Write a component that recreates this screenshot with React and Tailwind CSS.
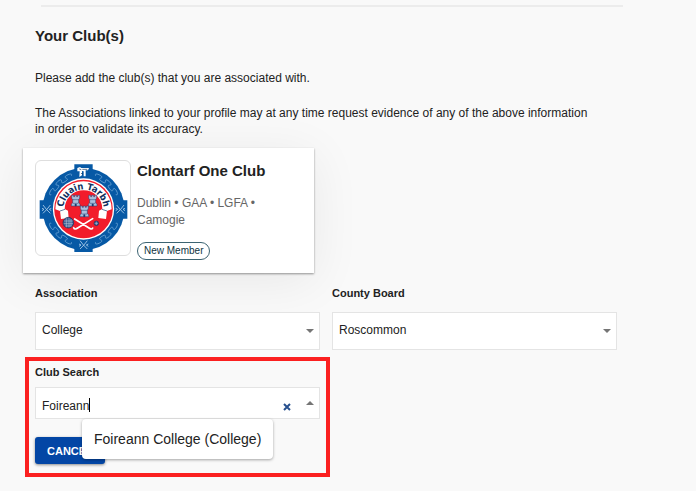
import React, { useState } from 'react';

const TOWERS = [
    { x: 125, y: 131 },
    { x: 176, y: 131 },
    { x: 151, y: 163 },
];

const CENTER = { x: 148.5, y: 155 };

// Wavy line that follows the blue ring between two angles (degrees)
const wavePath = (from, to) => {
    const steps = 60;
    const points = [];
    for (let i = 0; i <= steps; i++) {
        const t = i / steps;
        const angle = ((from + (to - from) * t) * Math.PI) / 180;
        const r = 106 + 7 * Math.sin(t * Math.PI * 5);
        const a = angle - 0.05 * Math.sin(t * Math.PI * 10);
        points.push(`${(CENTER.x + r * Math.cos(a)).toFixed(1)} ${(CENTER.y - r * Math.sin(a)).toFixed(1)}`);
    }
    return `M${points.join('L')}`;
};

const WAVES = [wavePath(24, 70), wavePath(110, 156), wavePath(204, 250), wavePath(290, 336)];

const Tower = ({ x, y }) => (
    <g transform={`translate(${x} ${y})`} stroke="#1d3f73" strokeWidth="1.5">
        <path d="M-12 -17h6v4h3v-4h6v4h3v-4h6v9l-3 3v11l4 3v6h-26v-6l4 -3v-11l-3 -3z" fill="#a9bfdc" />
        <path d="M-9 -4h18M-8 7h16" fill="none" />
        <path d="M-2 15v-6h4v6z" fill="#1d3f73" />
    </g>
);

const CrossedSticks = ({ transform }) => (
    <g transform={transform} fill="none" stroke="#b5d3ed" strokeWidth="2.5">
        <path d="M-11 -13Q-2 0 11 12M11 -13Q2 0 -11 12M-14 -3l6 3l-6 4M14 -3l-6 3l6 4" />
    </g>
);

const Crest = () => (
    <svg viewBox="6 11 282 282" className="block h-full w-full" role="img" aria-label="Cluain Tarbh crest">
        <path d="M121 21h55v24h-55zM121 260h55v24h-55zM17 129h24v55H17zM255 129h25v55h-25z" fill="#0759a5" />
        <circle cx="148.5" cy="155" r="123" fill="#0759a5" />
        {WAVES.map((d) => (
            <path key={d} d={d} fill="none" stroke="#6fa6d6" strokeWidth="2.5" />
        ))}
        <CrossedSticks transform="translate(38 156)" />
        <CrossedSticks transform="translate(259 156)" />
        <CrossedSticks transform="translate(149 263)" />
        <path d="M130 32l8 -3l4 3h23l-3 7h-7v18h-6v-15l-5 -1v13l-8 5l1 -17h-7z" fill="#fff" />
        <path d="M136 35l6 2M145 36h15M141 48l6 2" stroke="#0b2c57" strokeWidth="2" fill="none" />

        <circle cx="148.5" cy="155" r="92" fill="#fff" />
        <circle cx="148.5" cy="155" r="88" fill="#f21c2b" />
        <path
            d="M64 156A84.500 84.500 0 0 1 233 156L219 161L216 185L193 182L195 160L205 155A56 56 0 0 0 92 155L102 160L104 182L81 185L78 161z"
            fill="#fff"
        />
        <path d="M78 161l15 -5M219 161l-15 -5" stroke="#173b70" strokeWidth="2" />
        <path id="crest-arc" d="M88 165A61 61 0 1 1 209 165" fill="none" />
        <text
            fontFamily="'DejaVu Sans Condensed', 'DejaVu Sans', sans-serif"
            fontSize="28"
            fontWeight="700"
            fill="#102f5e"
            textAnchor="middle"
        >
            <textPath href="#crest-arc" startOffset="50%">Cluain Tarbh</textPath>
        </text>
        {TOWERS.map((t) => (
            <Tower key={`${t.x}-${t.y}`} x={t.x} y={t.y} />
        ))}

        <circle cx="103" cy="196" r="16" fill="#3a5e91" stroke="#132f5d" strokeWidth="2" />
        <path d="M90 191h26M89 199h28M97 183v27M105 182v28M111 185v22M94 206h19" stroke="#c9d5e7" strokeWidth="1.5" fill="none" />
        <circle cx="187" cy="198" r="7" fill="#375688" stroke="#132f5d" strokeWidth="1.5" />
        <path d="M182 198h10M187 193v10" stroke="#c9d5e7" strokeWidth="1.5" />
        <path
            d="M122 185l43 27c4 3 9 5 11 0M176 184l-45 28c-4 3 -10 5 -12 -1"
            fill="none"
            stroke="#fff"
            strokeWidth="5"
            strokeLinecap="round"
        />
    </svg>
);

const SelectField = ({ id, label, options }) => (
    <div>
        <label htmlFor={id} className="block text-[11px] leading-4 font-bold">{label}</label>
        <div className="relative mt-[11px]">
            <select
                id={id}
                className="block h-[38px] w-full appearance-none rounded-none border border-[#e4e4e4] bg-white pr-6 pb-0.5 pl-1.5 text-xs text-[#222]"
            >
                {options.map((o) => (
                    <option key={o}>{o}</option>
                ))}
            </select>
            <svg viewBox="0 0 8 4" className="pointer-events-none absolute top-[17px] right-1.5 h-1 w-2">
                <path d="M0 0h8L4 4z" fill="#757575" />
            </svg>
        </div>
    </div>
);

const App = () => {
    const [search, setSearch] = useState('Foireann');

    return (
        <main className="min-h-screen bg-[#f9f9f9] pt-[5px] pr-[79px] pb-3 pl-[35px] font-['Liberation_Sans',Arial,sans-serif] text-xs leading-4 text-[#222]">
            <hr className="-mr-1.5 ml-1.5 h-0.5 border-0 bg-[#ececec]" />

            <h2 className="mt-[19px] text-[15px] leading-5 font-bold">Your Club(s)</h2>
            <p className="mt-6">Please add the club(s) that you are associated with.</p>
            <p className="mt-[19px]">
                The Associations linked to your profile may at any time request evidence of any of the above information
                <br />
                in order to validate its accuracy.
            </p>

            <article className="mt-[11px] -ml-3 flex w-[291px] gap-1.5 bg-white p-3 shadow-[0_1px_2px_rgba(0,0,0,0.4),0_8px_50px_rgba(0,0,0,0.07)]">
                <div className="mb-[5px] size-24 shrink-0 overflow-hidden rounded-md border border-[#dedede] bg-white">
                    <Crest />
                </div>
                <div>
                    <h3 className="text-[15px] leading-[22px] font-bold">Clontarf One Club</h3>
                    <p className="mt-[13px] leading-[17px] text-[#666]">Dublin • GAA • LGFA • Camogie</p>
                    <span className="mt-[13px] inline-flex h-[18px] items-center rounded-full border border-[#3c6472] px-1.5 text-[10px] leading-4 text-[#0f3442]">
                        New Member
                    </span>
                </div>
            </article>

            <form className="mt-3 grid grid-cols-2 gap-x-3 gap-y-[7px]" onSubmit={(e) => e.preventDefault()}>
                <SelectField id="association" label="Association" options={['College', 'GAA', 'LGFA', 'Camogie']} />
                <SelectField id="county-board" label="County Board" options={['Roscommon', 'Dublin', 'Galway']} />

                <div className="-mx-2.5 border-4 border-[#fb2020] px-1.5 pt-[3px] pb-[9px]">
                    <label htmlFor="club-search" className="block text-[11px] leading-4 font-bold">Club Search</label>
                    <div className="relative mt-[7px]">
                        <div className="flex h-8 items-center border border-[#e4e4e4] bg-white pr-[5px] pl-1.5">
                            <input
                                id="club-search"
                                type="text"
                                autoComplete="off"
                                className="h-full field-sizing-content bg-transparent pt-1.5 text-xs caret-transparent outline-none"
                                value={search}
                                onChange={(e) => setSearch(e.target.value)}
                            />
                            <span className="mt-1 h-3.5 w-px bg-black" />
                            <button
                                type="button"
                                aria-label="Clear"
                                className="mt-2 mr-[15px] ml-auto"
                                onClick={() => setSearch('')}
                            >
                                <svg viewBox="0 0 8 8" className="block size-2">
                                    <path d="M1 1l6 6M7 1l-6 6" stroke="#27508e" strokeWidth="2" />
                                </svg>
                            </button>
                            <button type="button" aria-label="Close list">
                                <svg viewBox="0 0 8 4" className="block h-1 w-2">
                                    <path d="M0 4h8L4 0z" fill="#757575" />
                                </svg>
                            </button>
                        </div>
                        <ul
                            role="listbox"
                            className="absolute top-full left-[47px] z-10 rounded bg-white py-2.5 shadow-[0_1px_3px_rgba(0,0,0,0.35)]"
                        >
                            <li role="option" aria-selected="false" className="px-3 text-sm leading-5 whitespace-nowrap">
                                Foireann College (College)
                            </li>
                        </ul>
                    </div>
                    <button
                        type="button"
                        className="mt-[18px] block h-[27px] rounded-[3px] bg-[#0346a5] px-3 text-[11px] leading-4 font-bold text-white shadow-[0_1px_3px_rgba(0,0,0,0.45)]"
                    >
                        CANCEL
                    </button>
                </div>
            </form>
        </main>
    );
};

export default App;
